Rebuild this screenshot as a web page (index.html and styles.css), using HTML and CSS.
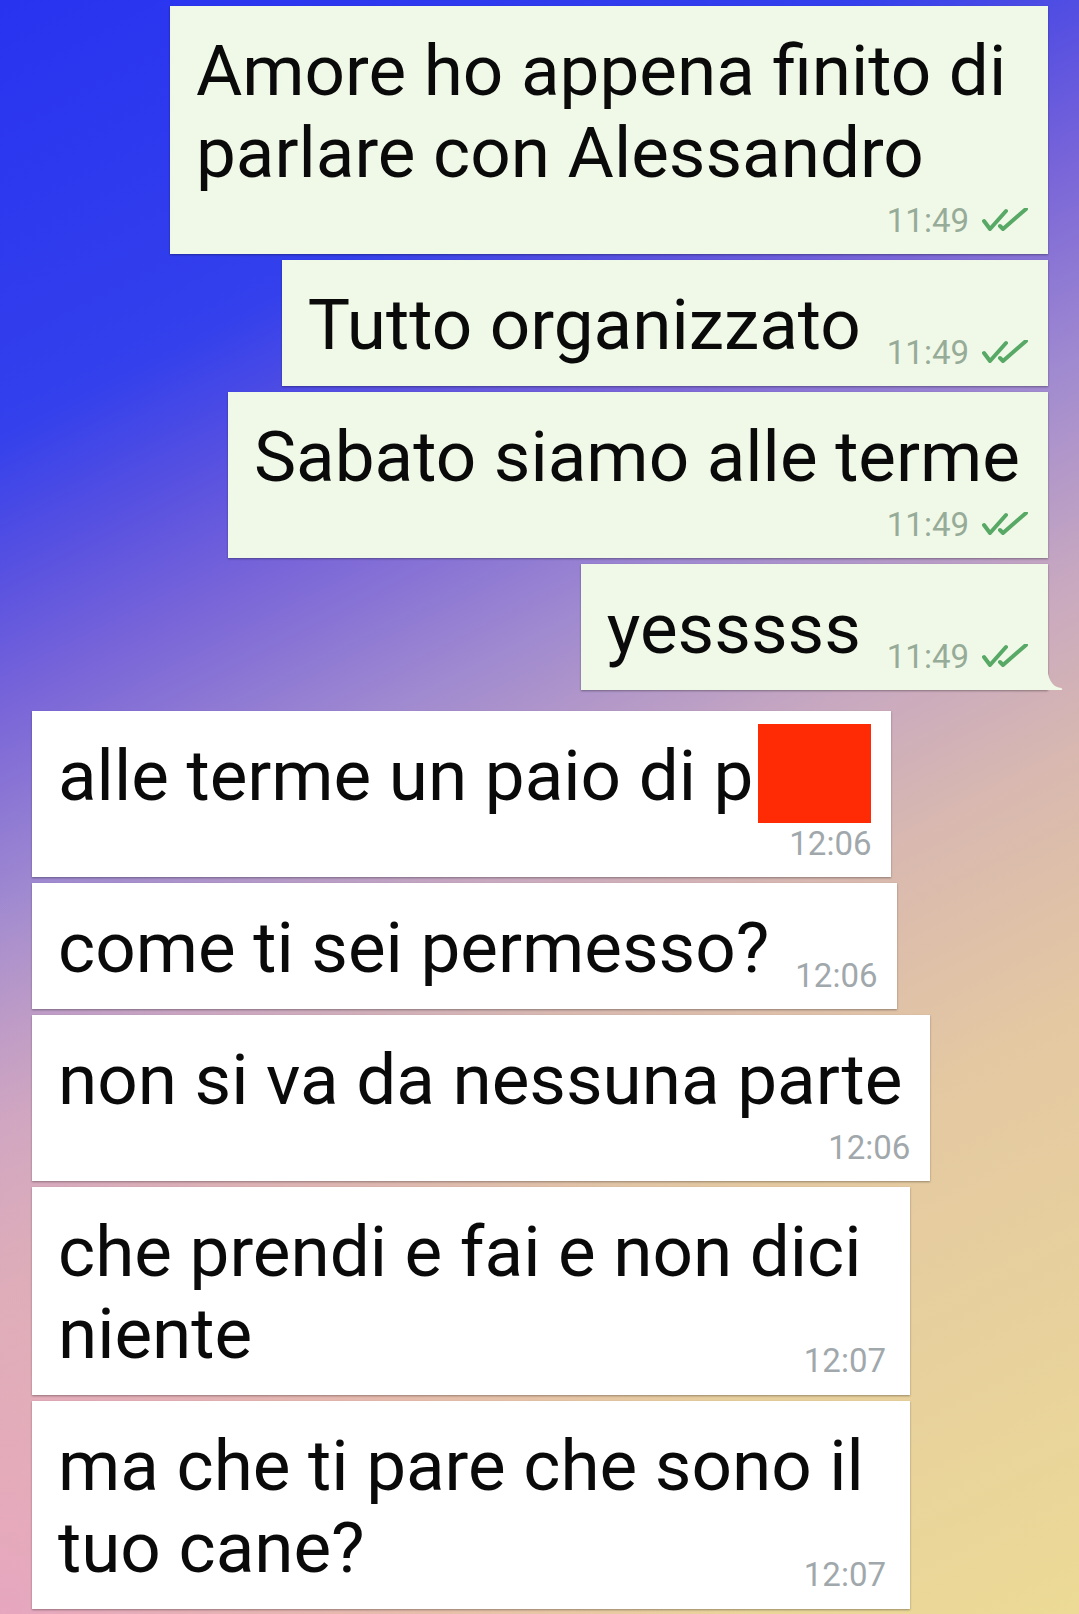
FILE: index.html
```html
<!DOCTYPE html>
<html lang="it">
<head>
  <meta charset="UTF-8">
  <meta name="viewport" content="width=device-width, initial-scale=1.0">
  <title>Chat</title>
  <link rel="stylesheet" href="styles.css">
</head>
<body>
  <div class="chat">

    <div class="bubble out multi">
      <div class="text">Amore ho appena finito di parlare con Alessandro</div>
      <div class="meta">
        <span class="time">11:49</span>
        <svg class="ticks" viewBox="0 0 46 24"><path d="M2 13 L8 21 L24 3 M18 18 L21 21 L44 1"/></svg>
      </div>
    </div>

    <div class="bubble out inline">
      <div class="text">Tutto organizzato</div>
      <div class="meta">
        <span class="time">11:49</span>
        <svg class="ticks" viewBox="0 0 46 24"><path d="M2 13 L8 21 L24 3 M18 18 L21 21 L44 1"/></svg>
      </div>
    </div>

    <div class="bubble out roomy">
      <div class="text">Sabato siamo alle terme</div>
      <div class="meta">
        <span class="time">11:49</span>
        <svg class="ticks" viewBox="0 0 46 24"><path d="M2 13 L8 21 L24 3 M18 18 L21 21 L44 1"/></svg>
      </div>
    </div>

    <div class="bubble out inline tail">
      <div class="text">yesssss</div>
      <div class="meta">
        <span class="time">11:49</span>
        <svg class="ticks" viewBox="0 0 46 24"><path d="M2 13 L8 21 L24 3 M18 18 L21 21 L44 1"/></svg>
      </div>
      <svg class="tail-shape" viewBox="0 0 16 28"><path d="M0 0 C0 17 5 25 14 26 Q16 26.5 15 28 L0 28 Z"/></svg>
    </div>

    <div class="bubble in first">
      <div class="text">alle terme un paio di p<span class="censor"></span></div>
      <div class="meta"><span class="time">12:06</span></div>
    </div>

    <div class="bubble in inline">
      <div class="text">come ti sei permesso?</div>
      <div class="meta"><span class="time">12:06</span></div>
    </div>

    <div class="bubble in roomy">
      <div class="text">non si va da nessuna parte</div>
      <div class="meta"><span class="time">12:06</span></div>
    </div>

    <div class="bubble in multi">
      <div class="text">che prendi e fai e non dici<br>niente<span class="meta meta-float"><span class="time">12:07</span></span></div>
    </div>

    <div class="bubble in multi">
      <div class="text">ma che ti pare che sono il<br>tuo cane?<span class="meta meta-float"><span class="time">12:07</span></span></div>
    </div>

  </div>
</body>
</html>
```

FILE: styles.css
```css
:root {
  --out-bg: #f0f9e7;
  --in-bg: #ffffff;
  --out-time: #97ab99;
  --in-time: #a1a8ac;
  --tick: #58a866;
}

* {
  margin: 0;
  padding: 0;
  box-sizing: border-box;
}

html,
body {
  min-height: 1614px;
}

body {
  font-family: Roboto, 'Noto Sans', sans-serif;
  color: #0a0a0a;
  background:
    radial-gradient(ellipse 70% 45% at 0% 100%, rgba(230, 160, 196, 0.85) 0%, rgba(230, 160, 196, 0) 100%),
    linear-gradient(153deg, #2833f0 0%, #3340ec 20%, #5a52e0 27%, #7a66d8 33%, #a08ad0 42%, #c8a8c0 52%, #d8b8b0 60%, #e4c8a2 72%, #ecda96 100%);
  overflow: hidden;
}

.chat {
  display: flex;
  flex-direction: column;
  gap: 6px;
  padding: 6px 31px 0 32px;
}

.bubble {
  position: relative;
  padding: 24px 20px 13px 26px;
  box-shadow: 0 1px 2px rgba(0, 0, 0, 0.35);
}

.bubble.out {
  align-self: flex-end;
  background: var(--out-bg);
}

.bubble.in {
  align-self: flex-start;
  background: var(--in-bg);
}

.bubble.in.first {
  margin-top: 15px;
}

.bubble.multi {
  width: 878px;
}

.text {
  font-size: 71px;
  line-height: 82px;
  margin-bottom: 7px;
}

.roomy .text {
  margin-right: 8px;
}

.meta {
  display: flex;
  justify-content: flex-end;
  align-items: baseline;
  gap: 13px;
  height: 40px;
  font-size: 33px;
  line-height: 40px;
}

.out .time {
  color: var(--out-time);
}

.in .time {
  color: var(--in-time);
}

.ticks {
  width: 46px;
  height: 24px;
}

.ticks path {
  fill: none;
  stroke: var(--tick);
  stroke-width: 4;
  stroke-linecap: round;
  stroke-linejoin: round;
}

/* testo e ora sulla stessa riga */
.bubble.inline {
  display: flex;
  align-items: flex-end;
  gap: 26px;
}

/* ora sull'ultima riga del testo, allineata a destra */
.meta-float {
  float: right;
  margin-top: 48px;
  margin-right: 4px;
  margin-bottom: -13px;
}

.multi .text::after {
  content: "";
  display: block;
  clear: both;
}

.censor {
  display: inline-block;
  width: 113px;
  height: 99px;
  margin: -11px 0 -6px 5px;
  vertical-align: top;
  background: #fe2b05;
}

.tail-shape {
  position: absolute;
  right: -15px;
  bottom: 0;
  width: 16px;
  height: 28px;
}

.tail-shape path {
  fill: var(--out-bg);
}
```
